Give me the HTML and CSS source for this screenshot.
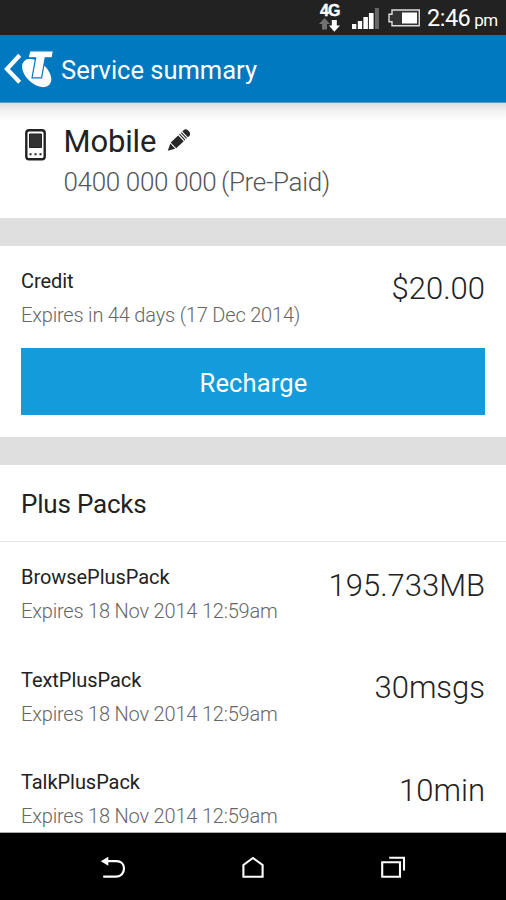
FILE: index.html
```html
<!DOCTYPE html>
<html lang="en">
<head>
<meta charset="utf-8">
<title>Service summary</title>
<link rel="stylesheet" href="styles.css">
</head>
<body>
<div class="phone">
  <div class="status">
    <div class="network">
      <span class="network-label">4G</span>
      <svg width="22" height="14" viewBox="0 0 22 14"><path fill="#707070" d="M5.5 0 L11 6 H8 V11.5 H3 V6 H0Z"/><path fill="#fff" d="M12.8 2 H17.8 V7.5 H21 L15.3 13.7 L10 7.5 H12.8Z"/></svg>
    </div>
    <svg class="signal" width="28" height="22" viewBox="0 0 28 22"><path fill="#fff" d="M0 16h4.3v5H0zM5.8 13h4.3v8H5.8zM11.4 9h4.5v12h-4.5zM16.9 5h4.7v16h-4.7z"/><path fill="#686868" d="M22.9 0h4v21h-4z"/></svg>
    <svg class="battery" width="33" height="18" viewBox="0 0 33 18"><path fill="#333" stroke="#ddd" stroke-width="1.4" d="M4 1H31.3V16.8H4V12.7H1V5.3H4Z"/><path fill="#fff" d="M14 3.5h15v11H14z"/></svg>
    <span class="clock">2:46</span><span class="meridiem">pm</span>
  </div>
  <header class="bar">
    <svg class="brand" width="54" height="40" viewBox="0 0 54 40"><path fill="none" stroke="#fff" stroke-width="4.2" d="M19.7 5.3 L7 19 L19.7 32.2"/><ellipse cx="36.7" cy="23" rx="17.3" ry="10.6" transform="rotate(43 36.7 23)" fill="#fff"/><path fill="#fff" stroke="#0079c1" stroke-width="1.2" d="M29.8 .8H53.4L52.2 7.8H45.2L41.6 27.8H32L35.7 7.8H28Z"/></svg>
    <h1>Service summary</h1>
  </header>
  <main>
    <section class="service">
      <svg class="handset" width="22" height="32" viewBox="0 0 22 32"><rect x="1.3" y="1.3" width="18.4" height="29" rx="2.8" fill="#fff" stroke="#222" stroke-width="2.4"/><path fill="#333" stroke="#222" d="M4.5 5h12v13.5h-12z"/><path fill="#222" d="M4.5 24.2h2v2h-2zM9.5 24.2h2v2h-2zM14.5 24.2h2v2h-2z"/></svg>
      <div>
        <div class="name"><h2>Mobile</h2>
          <svg class="pencil" width="23" height="23" viewBox="0 0 24 24"><g transform="translate(.8 22.8) rotate(-43.5)" fill="#282828"><path d="M0 0 L7.2 -3.7 V3.7Z"/><path d="M8.2 -4.2H19V4.2H8.2Z"/><path d="M20.2 -4.2H21.4V4.2H20.2zM22.6 -4.2H23.8V4.2H22.6z"/><path d="M25 -4.2H27Q30 -4.2 30 -1V1Q30 4.2 27 4.2H25Z"/></g></svg>
        </div>
        <div class="number">0400 000 000 <span class="plan">(Pre-Paid)</span></div>
      </div>
    </section>
    <section class="credit">
      <div class="row">
        <div><div class="label">Credit</div><div class="expiry">Expires in 44 days (17 Dec 2014)</div></div>
        <div class="value">$20.00</div>
      </div>
      <button class="recharge" type="button">Recharge</button>
    </section>
    <section class="packs">
      <h3>Plus Packs</h3>
      <div class="row pack">
        <div><div class="label">BrowsePlusPack</div><div class="expiry">Expires 18 Nov 2014 12:59am</div></div>
        <div class="value">195.733MB</div>
      </div>
      <div class="row pack">
        <div><div class="label">TextPlusPack</div><div class="expiry">Expires 18 Nov 2014 12:59am</div></div>
        <div class="value">30msgs</div>
      </div>
      <div class="row pack">
        <div><div class="label">TalkPlusPack</div><div class="expiry">Expires 18 Nov 2014 12:59am</div></div>
        <div class="value">10min</div>
      </div>
    </section>
  </main>
  <nav class="nav">
    <svg width="26" height="24" viewBox="0 0 26 24"><path fill="none" stroke="#fff" stroke-width="2.2" d="M6 5.2H16.5C21.2 5.2 24 8.4 24 12.5C24 17 21 20.6 16.3 20.6H3.2"/><path fill="#fff" d="M.8 5.3L8.3 .8V9.8Z"/></svg>
    <svg width="24" height="24" viewBox="0 0 24 24"><path fill="none" stroke="#fff" stroke-width="2.1" d="M2.4 20.8V9L12 2L21.6 9V20.8Z"/></svg>
    <svg width="26" height="24" viewBox="0 0 26 24"><path fill="none" stroke="#fff" stroke-width="2.1" d="M2.2 6.2H20V20.8H2.2ZM9.2 1.8H24V14.5"/></svg>
  </nav>
</div>
</body>
</html>
```
FILE: styles.css
```css
* { box-sizing: border-box; }
body { margin: 0; background: #fff; font-family: Roboto, "Liberation Sans", sans-serif; color: #222; }
h1, h2, h3 { margin: 0; font-weight: 400; }
svg { display: block; flex: none; }
.phone { width: 506px; height: 900px; display: flex; flex-direction: column; overflow: hidden; white-space: nowrap; }

.status { height: 35px; flex: none; background: #222; color: #fff; display: flex; padding-left: 319px; }
.network { width: 22px; padding-top: 3px; }
.network-label { display: block; font: 700 16px/15px "Liberation Sans", sans-serif; padding-left: 1px; height: 15px; letter-spacing: -.9px; -webkit-text-stroke: .4px #fff; }
.signal { margin: 8px 0 0 11px; }
.battery { margin: 9px 0 0 8px; }
.clock { font-size: 23.5px; line-height: 36px; margin-left: 6px; letter-spacing: -.5px; }
.meridiem { font-size: 17px; line-height: 40px; margin-left: 4px; letter-spacing: -.6px; }

.bar { height: 68px; flex: none; background: #0079c1; border-bottom: 1px solid #5b9bc8; display: flex; align-items: flex-start; }
.brand { margin-top: 15px; }
.bar h1 { color: #fff; font-size: 25.5px; line-height: 40px; margin: 15px 0 0 7px; }

main { flex: 1; min-height: 0; overflow: hidden; background: #dfdfdf; }
main section { background: #fff; }
main .service { height: 114.5px; display: flex; gap: 16.5px; padding: 26px 0 0 25px; background: linear-gradient(#dedede, #f2f2f2 8px, #fff 18px); }
.name { display: flex; gap: 11px; height: 40px; margin-top: -7px; }
.name h2 { font-size: 31px; line-height: 39px; letter-spacing: -.15px; }
.pencil { margin-top: 7px; }
.number { font-size: 26px; font-weight: 300; line-height: 40px; letter-spacing: -.33px; color: #555; }
.plan { margin-left: -1.5px; }

.credit { height: 191.5px; margin-top: 28px; padding: 18px 21px 0; }
.row { display: flex; justify-content: space-between; }
.label { font-size: 20px; line-height: 34px; letter-spacing: -.05px; }
.expiry { font-size: 20px; font-weight: 300; line-height: 34px; letter-spacing: -.19px; color: #666; }
.value { font-size: 31px; font-weight: 300; line-height: 34px; margin-top: 8.7px; }
.recharge { display: block; width: 100%; height: 67px; margin-top: 16.6px; padding: 2px 0 0 1px; border: 0; background: #139bdb; color: #fff; font: 400 25.5px Roboto, sans-serif; letter-spacing: .15px; }

.packs { margin-top: 28px; }
.packs h3 { height: 77px; border-bottom: 1px solid #e8e8e8; padding-left: 21px; font-size: 26px; line-height: 79px; letter-spacing: -.2px; }
.pack { height: 102.7px; padding: 18px 21px 0; }

.nav { height: 68px; flex: none; background: #000; border-top: 1px solid #aaa; display: flex; justify-content: space-between; padding: 23px 100px 0 100px; }
```
